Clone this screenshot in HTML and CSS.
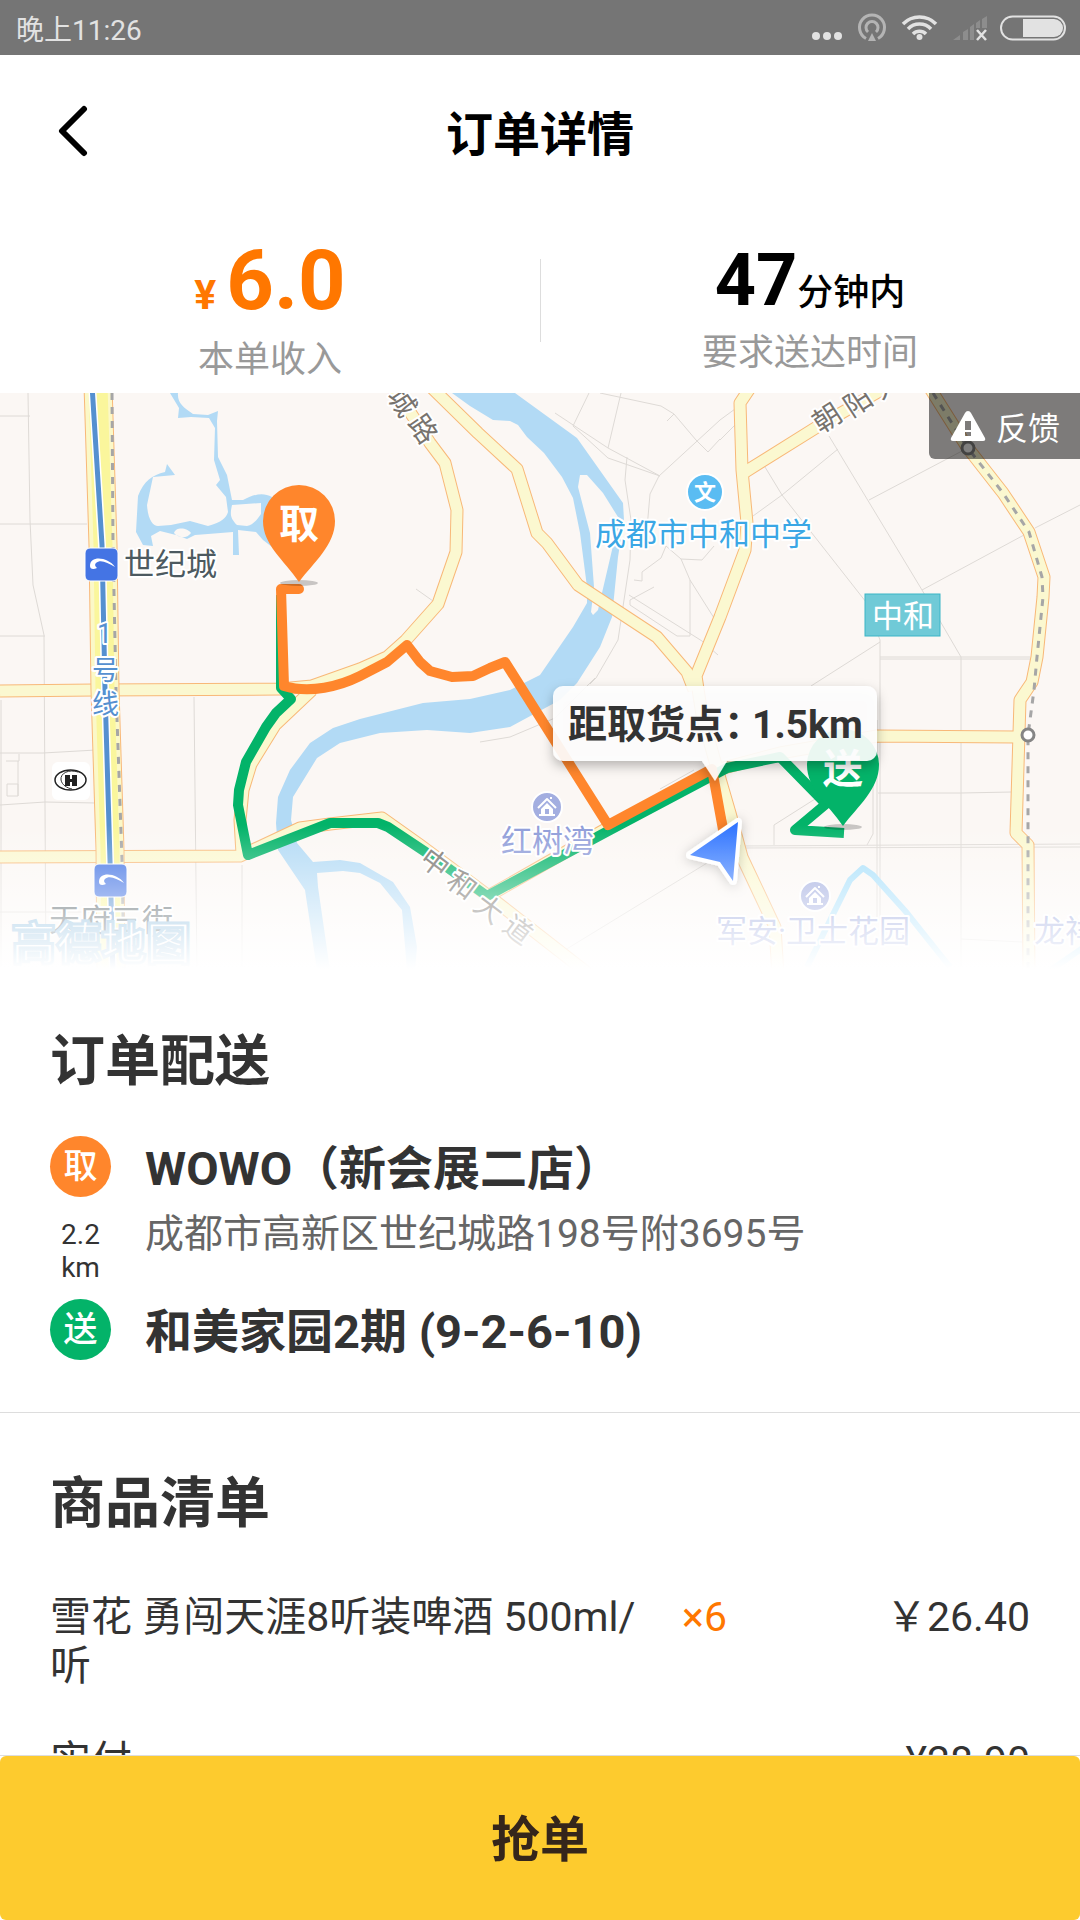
FILE: index.html
```html
<!DOCTYPE html>
<html lang="zh-CN">
<head>
<meta charset="utf-8">
<meta name="viewport" content="width=device-width, initial-scale=1">
<title>订单详情</title>
<link rel="stylesheet" href="styles.css">
</head>
<body>
<div class="status">
  <span>晚上11:26</span>
  <svg class="status-icons" viewBox="0 0 264 55" width="264" height="55" aria-hidden="true">
    <g fill="#e2e2e2"><circle cx="12" cy="36" r="4"/><circle cx="23" cy="36" r="4"/><circle cx="34" cy="36" r="4"/></g>
    <g fill="none" stroke="#b4b4b4" stroke-width="3">
      <path d="M62 38.500a12.500 12.500 0 1 1 12 0"/>
      <path d="M64 32a6 6 0 1 1 8 0"/>
    </g>
    <path d="M68 33l4 8h-8z" fill="#b4b4b4"/>
    <g fill="none" stroke="#e2e2e2" stroke-width="3.500">
      <path d="M99 24a23 23 0 0 1 33 0"/><path d="M104 29a16 16 0 0 1 23 0"/><path d="M109 34a9 9 0 0 1 13 0"/>
    </g>
    <circle cx="115.500" cy="37" r="3" fill="#e2e2e2"/>
    <g fill="#8d8d8d"><path d="M149 40l7-5v5zM159 32l5-3v11h-5zM166 27l4-3v16h-4zM172 23l4-3v8h-4zM178 19l5-3v12h-5z"/></g>
    <path d="M173 30l9 10M182 30l-9 10" stroke="#e2e2e2" stroke-width="2.500"/>
    <rect x="197" y="16.500" width="64" height="23" rx="11.500" fill="none" stroke="#e2e2e2" stroke-width="2"/>
    <path d="M219 19h31a9 9 0 0 1 0 18h-31z" fill="#e2e2e2"/>
  </svg>
</div>

<header class="topbar">
  <button class="back" type="button" aria-label="返回">
    <svg viewBox="0 0 32 52" width="32" height="52" aria-hidden="true"><path d="M26 4L4 26l22 22" fill="none" stroke="#000" stroke-width="6" stroke-linecap="round" stroke-linejoin="round"/></svg>
  </button>
  <h1 class="title">订单详情</h1>
</header>

<main class="content">
  <section class="stats">
    <div class="stat">
      <div class="figure income"><span class="yen">¥</span>6.0</div>
      <div class="stat-label income-label">本单收入</div>
    </div>
    <div class="stat">
      <div class="figure deadline">47<span class="unit">分钟内</span></div>
      <div class="stat-label">要求送达时间</div>
    </div>
  </section>

  <section class="map">
    <svg class="map-canvas" viewBox="0 393 1080 576" role="img" aria-label="配送路线地图">
      <defs>
        <linearGradient id="fade" x1="0" y1="0" x2="0" y2="1"><stop offset="0" stop-color="#fff" stop-opacity="0"/><stop offset="1" stop-color="#fff"/></linearGradient>
        <linearGradient id="arrow" x1="0" y1="0" x2="0" y2="1"><stop offset="0" stop-color="#2f74ff"/><stop offset="1" stop-color="#3f80ff"/></linearGradient>
        <filter id="soft" x="-20%" y="-50%" width="140%" height="200%"><feDropShadow dx="0" dy="5" stdDeviation="6" flood-color="#000" flood-opacity=".3"/></filter>
        <filter id="glow" x="-50%" y="-50%" width="200%" height="200%"><feDropShadow dx="0" dy="2" stdDeviation="6" flood-color="#000" flood-opacity=".25"/></filter>
        <g id="roads">
          <path d="M0 691L95 690 280 689 312 686 360 669 387 657 406 640 438 604 456 552 457 510 445 463 430 443 410 412 390 385"/>
          <path d="M430 386L478 433 517 469 537 533 547 543 578 585 657 637 687 672 694 690"/>
          <path d="M752 385L740 403 742 470 747 523 745 550 720 617 696 676 702 715 716 765 730 813 742 857 775 927 778 975"/>
          <path d="M745 472L817 427 890 385"/>
          <path d="M928 385L967 447 1003 493 1029 532 1044 577 1043 597 1037 657 1032 682 1020 700 1016 833 1028 845 1029 975"/>
          <path d="M1016 737L877 736 780 753 716 770 606 829 490 895"/>
          <path d="M0 857L240 856 300 828 330 824 382 818 420 845 490 897 590 975"/>
          <path d="M242 854L240 820 243 790 251 764 275 725 312 690"/>
        </g>
      </defs>
      <rect x="0" y="393" width="1080" height="576" fill="#fbf7f4"/>

      <g class="lane">
        <path d="M28 393L30 520 33 585 44 635 46 975M0 416H30M0 524H87M0 636H45M0 753H43L96 750M0 805L45 802 96 803M1 700V975M194 697L197 975M242 865V975M18 761V796M6 761H19V754M7 784H18V796H7zM0 912H100M416 589L433 601"/>
        <path d="M555 413L608 448 660 476 608 458 573 426 589 393M621 393L608 448M600 393L661 406 674 414 696 440 708 452 720 439M674 414L667 421M720 420L659 476 650 494 646 540M627 457L625 480 631 520 630 560 618 640 596 678 590 684M634 580L642 581 642 572 661 558 666 546 681 559 702 560 714 546M681 559L690 580 714 618M690 580V636L677 636 630 605 630 600 654 587M629 595L702 641 718 655M480 742L510 737 555 718 595 678M660 789L694 770"/>
        <path d="M720 420L735 409M720 440L735 425M829 436L922 590 961 657V975M765 467L782 495 866 602 880 640V920M838 449L782 495 753 516M869 500L962 451M922 590L1024 535M1035 528L1080 505M880 642L811 686M880 657H1030M880 659H1030M878 793L961 793 1012 792M740 846L1080 844M740 848L1080 847M774 845V825L815 799M873 784V834L867 845M961 939L1022 942M565 950L712 860M877 720V920"/>
      </g>

      <g fill="#b2daf5">
        <path fill-rule="evenodd" d="M452 393L470 406 493 420 510 421 518 425 527 437 544 453 562 477 573 498 580 533 587 587 587 603 573 627 540 675 510 690 470 699 423 703 360 719 333 728 310 743 290 770 278 797 276 823 278 850 305 890 317 970H330L318 887 317 873 343 871 360 873 380 883 402 910 407 970H415L417 947 410 907 393 882 360 863 340 860 313 862 297 843 291 820 293 797 317 758 340 743 380 733 427 730 470 733 510 727 560 700 577 683 600 647 612 617 618 557 624 520 623 503 577 438 515 393zM580 475L587 475 603 493 618 517 612 550 598 610 593 615 591 612 594 587 590 533 578 487z"/>
        <path fill-rule="evenodd" d="M170 393H178C177 403 184 408 193 414L208 415 218 411 217 421 218 457 227 475 232 500 243 500C255 494 263 492 272 497V547L263 540 256 532 238 530 239 555H233V532L208 534 195 535 187 539 176 535 160 531 151 536 153 546 143 545 136 532 138 496C144 481 152 475 165 472L167 464 175 475 153 477 147 505C148 520 153 526 158 526L171 525 190 521 208 526C222 522 226 518 228 512L226 497 216 485 220 480 214 460 215 428 209 418 191 417 178 418 179 408zM232 505C230 514 230 518 237 525L247 526C254 525 258 518 261 514L261 503zM174 533C176 526 188 528 191 533 187 539 178 538 174 533z"/>
      </g>
      <path class="stream" d="M807 967L850 880 863 868 873 875 907 913 950 967M1048 972L1084 947"/>

      <use href="#roads" class="road-edge"/>
      <use href="#roads" class="road-fill"/>
      <path class="metro-edge" d="M98 385L103 545 105 690 110 850 111 975"/>
      <path class="metro-side" d="M98 385L103 545 105 690 110 850 111 975"/>
      <path class="metro-mid" d="M98 385L103 545 105 690 110 850 111 975"/>
      <path class="metro-halo" d="M92 385L102 545 105 690 110 860 113 975"/>
      <path class="metro-line" d="M92 385L102 545 105 690 110 860 113 975"/>
      <path class="rail" d="M112 393L113 545 116 690 122 860 124 968M933 393L967 447 1003 493 1029 532 1042 577 1043 597 1037 657 1034 690 1028 735V968"/>
      <circle class="stop" cx="1028" cy="735" r="6"/><circle class="stop" cx="968" cy="448" r="6"/>

      <g class="route">
        <path class="drop" d="M281 595V688L291 699 276 713 266 727 246 762 239 790 238 805 248 855 330 823H378L388 827 430 855 487 896 610 830 727 768 780 757 826 804 795 830 844 833"/>
        <path class="pick" d="M299 589H281L284 686C310 694 340 686 360 676L387 662 407 645 420 662 430 671 452 677 473 676 490 668 505 662 608 825 712 769 724 835"/>
      </g>

      <g class="place">
        <rect x="85" y="548" width="33" height="33" rx="5" class="station"/>
        <path d="M90 566c0-11 18-9 25 1-8-5-15-8-19-4-2 2 0 4 1 5-4 2-7 1-7-2z" fill="#fff"/>
        <rect x="94" y="864" width="33" height="33" rx="5" class="station"/>
        <path d="M99 882c0-11 18-9 25 1-8-5-15-8-19-4-2 2 0 4 1 5-4 2-7 1-7-2z" fill="#fff"/>
        <text class="halo ink" x="124" y="575">世纪城</text>
        <text class="halo ink" x="49" y="931">天府三街</text>
        <g class="halo metro-name"><text x="97" y="643">1</text><text x="92" y="680">号</text><text x="92" y="714">线</text></g>
        <text class="halo school" x="595" y="545">成都市中和中学</text>
        <circle cx="705" cy="492" r="18" fill="#5abcf2" stroke="#fff" stroke-width="2"/>
        <text class="school-mark" x="705" y="500">文</text>
        <rect x="865" y="594" width="75" height="42" fill="#70cad7" stroke="#3ab5c6"/>
        <text class="district" x="903" y="627">中和</text>
        <g id="home"><circle cx="547" cy="807" r="15" fill="#a3aee0" stroke="#fff" stroke-width="2"/><path d="M538 808l9-9 9 9M551 799v-2" fill="none" stroke="#fff" stroke-width="2"/><path d="M541 809l6-6 6 6v5h2v2h-16v-2h2zM545 809v5h4v-5z" fill="#fff" fill-rule="evenodd"/></g>
        <use href="#home" x="268" y="89"/>
        <text class="halo estate" x="501" y="852">红树湾</text>
        <text class="halo estate" x="716" y="942">军安·卫士花园</text>
        <text class="halo estate" x="1034" y="942">龙祥</text>
        <g class="halo street">
          <text transform="translate(402 402) rotate(56)" y="10">城</text><text transform="translate(423 429) rotate(56)" y="10">路</text>
          <text transform="translate(827 418) rotate(-33)" y="10">朝</text><text transform="translate(858 402) rotate(-33)" y="10">阳</text><text transform="translate(887 384) rotate(-33)" y="10">大</text>
          <text transform="translate(435 863) rotate(37)" y="10">中</text><text transform="translate(462 885) rotate(37)" y="10">和</text><text transform="translate(489 909) rotate(37)" y="10">大</text><text transform="translate(518 930) rotate(37)" y="10">道</text>
        </g>
        <rect x="52" y="762" width="38" height="38" rx="6" fill="#fff"/>
        <ellipse cx="70.500" cy="780" rx="15.500" ry="10" fill="none" stroke="#222" stroke-width="1.500"/>
        <path d="M78 772c-9-3-18 1-17 8 1 5 6 8 11 9" fill="none" stroke="#333"/>
        <path d="M65 775h5v4h2v-4h5v11h-5v-4h-2v4h-5z" fill="#222"/>
      </g>

      <g class="pin">
        <ellipse cx="299" cy="583" rx="19" ry="3" fill="#000" opacity=".2"/>
        <path d="M299 582C284 560 263 545 263 521a36 36 0 0 1 72 0C335 545 314 562 299 582z" fill="#ff862c"/>
        <text x="299" y="538">取</text>
        <ellipse cx="843" cy="827" rx="19" ry="3" fill="#000" opacity=".2"/>
        <path d="M843 826C828 804 807 789 807 765a36 36 0 0 1 72 0C879 789 858 806 843 826z" fill="#03b369"/>
        <text x="843" y="783">送</text>
      </g>

      <path d="M690 855L738 822 733 881 720 862z" fill="url(#arrow)" stroke="#fff" stroke-width="8" paint-order="stroke" filter="url(#glow)"/>
      <path d="M563 686H867a10 10 0 0 1 10 10V751a10 10 0 0 1-10 10H727L715 781 702 761H563a10 10 0 0 1-10-10V696a10 10 0 0 1 10-10z" fill="#fff" fill-opacity=".9" filter="url(#soft)"/>
      <g class="tip"><text x="568" y="738">距取货点：</text><text x="752" y="738">1.5km</text></g>

      <text class="brand" x="11" y="960">高德地图</text>
      <rect x="0" y="825" width="1080" height="144" fill="url(#fade)"/>
    </svg>
    <button class="feedback" type="button">
      <svg viewBox="0 0 36 32" width="36" height="32" aria-hidden="true"><path fill-rule="evenodd" d="M18 1q2 0 3 2l14 25q1 3-2 3H3q-3 0-2-3L15 3q1-2 3-2zM15 11v9h6v-9zM15 22v4h6v-4z" fill="#fff"/></svg>
      <span>反馈</span>
    </button>
  </section>

  <section class="delivery">
    <h2 class="heading">订单配送</h2>
    <div class="legs">
      <span class="badge badge-pick">取</span>
      <h3 class="place-name">WOWO（新会展二店）</h3>
      <p class="distance">2.2<br>km</p>
      <p class="address">成都市高新区世纪城路198号附3695号</p>
      <span class="badge badge-drop">送</span>
      <h3 class="place-name">和美家园2期 (9-2-6-10)</h3>
    </div>
  </section>

  <section class="goods">
    <h2 class="heading">商品清单</h2>
    <table class="goods-table">
      <tr><td class="goods-name">雪花 勇闯天涯8听装啤酒 500ml/听</td><td class="goods-count">×6</td><td class="goods-price">￥26.40</td></tr>
      <tr><td class="goods-name">实付</td><td></td><td class="goods-price">¥28.90</td></tr>
    </table>
  </section>
</main>

<footer class="action"><button class="grab" type="button">抢单</button></footer>
</body>
</html>
```
FILE: styles.css
```css
* { box-sizing: border-box; margin: 0; padding: 0; }

body {
  display: flex;
  flex-direction: column;
  height: 100vh;
  background: #fff;
  color: #333;
  font-family: Roboto, "Noto Sans CJK SC", sans-serif;
}

button { border: 0; font-family: inherit; cursor: pointer; }

.status {
  display: flex;
  align-items: center;
  justify-content: space-between;
  flex: none;
  height: 55px;
  padding: 0 12px 0 16px;
  background: #757575;
  color: #e2e2e2;
  font-size: 28px;
}

.topbar {
  display: grid;
  grid-template-columns: 122px 1fr 122px;
  align-items: center;
  flex: none;
  height: 155px;
  padding-bottom: 4px;
}
.back { justify-self: end; width: 64px; height: 64px; background: none; text-align: left; }
.back svg { display: block; }
.title { color: #000; font-size: 47px; font-weight: 700; text-align: center; }

.content { flex: 1; min-height: 0; overflow-y: auto; scrollbar-width: none; }

.stats {
  display: grid;
  grid-template-columns: 1fr 1fr;
  height: 183px;
  padding-top: 21px;
  background: linear-gradient(#ddd, #ddd) 50% 49px / 1px 83px no-repeat;
}
.stat { text-align: center; }
.figure { font-weight: 700; line-height: 100px; }
.income { color: #ff7700; font-size: 83px; }
.yen { margin-right: 10px; font-size: 41px; line-height: 1; }
.deadline { color: #000; font-size: 72px; }
.unit { font-size: 36px; font-weight: 500; line-height: 1; }
.stat-label { color: #999; font-size: 36px; line-height: 44px; }
.income-label { margin-top: 7px; }

.map { position: relative; }
.map-canvas { display: block; width: 100%; height: auto; }
.feedback {
  position: absolute;
  top: 0;
  right: 0;
  display: flex;
  align-items: center;
  gap: 10px;
  height: 66px;
  padding: 0 20px 0 21px;
  border-radius: 0 0 0 6px;
  background: rgba(0, 0, 0, .5);
  color: #fff;
  font-size: 32px;
}

.map-canvas path { stroke-linejoin: round; }
.lane { fill: none; stroke: #dedad6; stroke-width: 1; }
.stream { fill: none; stroke: #a9e0fb; stroke-width: 6; }
.road-edge { fill: none; stroke: #f8b878; stroke-width: 13; }
.road-fill { fill: none; stroke: #fbf8d0; stroke-width: 11; }
.metro-edge { fill: none; stroke: #f8b878; stroke-width: 29; }
.metro-side { fill: none; stroke: #fbf8c8; stroke-width: 27; }
.metro-mid { fill: none; stroke: #faf69c; stroke-width: 19; }
.metro-halo { fill: none; stroke: #fff; stroke-width: 8; }
.metro-line { fill: none; stroke: #5590d0; stroke-width: 5; }
.rail { fill: none; stroke: #a6a6a6; stroke-width: 3; stroke-dasharray: 7 7; }
.stop { fill: #fff; stroke: #858585; stroke-width: 3; }
.route { fill: none; stroke-width: 10; }
.drop { stroke: #03b369; }
.pick { stroke: #ff862c; stroke-linecap: round; }
.station { fill: #4474e4; stroke: #fff; stroke-width: 1; }
.place { font-size: 31px; }
.halo { stroke: #fff; stroke-width: 4; stroke-linejoin: round; paint-order: stroke; }
.ink { fill: #4d5a60; }
.metro-name { fill: #5590d0; font-size: 27px; }
.school { fill: #3ba7e5; }
.school-mark { fill: #fff; font-size: 22px; font-weight: 700; text-anchor: middle; }
.district { fill: #fff; text-anchor: middle; }
.estate { fill: #8f9dd9; }
.street { fill: #77736e; font-size: 28px; text-anchor: middle; }
.pin { fill: #fff; font-size: 40px; font-weight: 700; text-anchor: middle; }
.tip { fill: #333; font-size: 39px; font-weight: 700; }
.brand { fill: #fff; stroke: #7fb5da; stroke-width: 3; font-size: 45px; font-weight: 700; }

.delivery { padding: 57px 50px 47px; border-bottom: 1px solid #ddd; }
.heading { font-size: 55px; font-weight: 700; line-height: 70px; }
.legs {
  display: grid;
  grid-template-columns: 61px 1fr;
  gap: 9px 34px;
  margin-top: 40px;
}
.badge {
  width: 61px;
  height: 61px;
  border-radius: 50%;
  color: #fff;
  font-size: 34px;
  font-weight: 500;
  line-height: 60px;
  text-align: center;
}
.badge-pick { background: #ff862c; }
.badge-drop { background: #03b369; }
.place-name { font-size: 47px; font-weight: 700; line-height: 66px; }
.distance { padding: 7px 0 6px; font-size: 28px; line-height: 33px; text-align: center; }
.address { color: #666; font-size: 39px; line-height: 46px; }

.goods { padding: 55px 50px 0; }
.goods-table { width: 100%; margin-top: 55px; border-collapse: collapse; font-size: 41px; line-height: 49px; }
.goods-table td { padding-bottom: 46px; vertical-align: top; }
.goods-name { width: 632px; padding-right: 32px; text-align: left; }
.goods-count { color: #ff7700; }
.goods-price { text-align: right; }

.action { flex: none; border-top: 1px solid #ddd; }
.grab {
  display: block;
  width: 100%;
  height: 164px;
  padding-bottom: 5px;
  border-radius: 6px;
  background: #fdcb2e;
  color: #35261b;
  font-size: 49px;
  font-weight: 700;
}
```
